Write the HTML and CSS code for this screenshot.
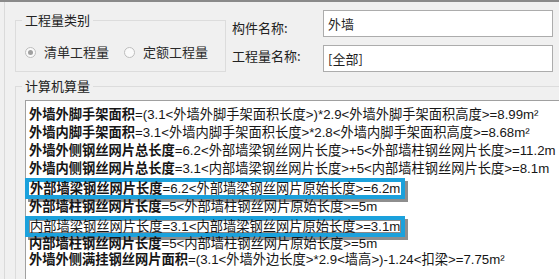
FILE: index.html
```html
<!DOCTYPE html>
<html lang="zh-CN">
<head>
<meta charset="utf-8">
<title>工程量</title>
<link rel="stylesheet" href="styles.css">
</head>
<body>
<div class="win">
  <div class="frame">
    <div class="top">
      <fieldset class="group group-type">
        <legend>工程量类别</legend>
        <div class="radios">
          <span class="radio"><span class="dot on"></span>清单工程量</span>
          <span class="radio"><span class="dot"></span>定额工程量</span>
        </div>
      </fieldset>
      <div class="form">
        <span class="lbl lbl-a">构件名称:</span>
        <span class="input">外墙</span>
        <span class="lbl lbl-b">工程量名称:</span>
        <span class="input">[全部]</span>
      </div>
    </div>
    <fieldset class="group group-calc">
      <legend>计算机算量</legend>
      <div class="list">
        <div class="row"><b>外墙外脚手架面积</b>=(3.1&lt;外墙外脚手架面积长度&gt;)*2.9&lt;外墙外脚手架面积高度&gt;=8.99m²</div>
        <div class="row"><b>外墙内脚手架面积</b>=3.1&lt;外墙内脚手架面积长度&gt;*2.8&lt;外墙内脚手架面积高度&gt;=8.68m²</div>
        <div class="row"><b>外墙外侧钢丝网片总长度</b>=6.2&lt;外部墙梁钢丝网片长度&gt;+5&lt;外部墙柱钢丝网片长度&gt;=11.2m</div>
        <div class="row"><b>外墙内侧钢丝网片总长度</b>=3.1&lt;内部墙梁钢丝网片长度&gt;+5&lt;内部墙柱钢丝网片长度&gt;=8.1m</div>
        <div class="row row-hl"><span class="hl"><b>外部墙梁钢丝网片长度</b>=6.2&lt;外部墙梁钢丝网片原始长度&gt;=6.2m</span></div>
        <div class="row"><b>外部墙柱钢丝网片长度</b>=5&lt;外部墙柱钢丝网片原始长度&gt;=5m</div>
        <div class="row row-hl"><span class="hl focus">内部墙梁钢丝网片长度=3.1&lt;内部墙梁钢丝网片原始长度&gt;=3.1m</span></div>
        <div class="row row-tight"><b>内部墙柱钢丝网片长度</b>=5&lt;内部墙柱钢丝网片原始长度&gt;=5m</div>
        <div class="row row-tight"><b>外墙外侧满挂钢丝网片面积</b>=(3.1&lt;外墙外边长度&gt;*2.9&lt;墙高&gt;)-1.24&lt;扣梁&gt;=7.75m²</div>
      </div>
    </fieldset>
  </div>
</div>
</body>
</html>
```

FILE: styles.css
```css
html, body {
  margin: 0;
  padding: 0;
}

body {
  font-family: "Noto Sans CJK SC", "Noto Sans", sans-serif;
  font-size: 13px;
  color: #1e1e1e;
  background: #f0f0f0;
}

.win {
  width: 559px;
  height: 279px;
  box-sizing: border-box;
  overflow: hidden;
  background: #f0f0f0;
  border-top: 2px solid #8a8a8a;
  padding-left: 4px;
}

.frame {
  height: 100%;
  border-left: 1px solid #dadada;
}

.top {
  display: flex;
  align-items: flex-start;
}

.group {
  margin: 0;
  border: 1px solid #dcdcdc;
  padding: 0 0 0 6px;
  box-sizing: border-box;
}

.group legend {
  padding: 0 3px;
  line-height: 16px;
  color: #222;
}

.group-type {
  margin: 10px 0 0 10px;
  width: 211px;
  height: 60px;
}

.radios {
  display: flex;
  align-items: center;
  padding-top: 16px;
  padding-left: 3px;
  line-height: 16px;
  color: #2a2a2a;
}

.radio {
  display: flex;
  align-items: center;
  gap: 8px;
  margin-right: 15px;
}

.dot {
  width: 11px;
  height: 11px;
  box-sizing: border-box;
  border: 1px solid #bdbdbd;
  border-radius: 50%;
  background: #fafafa;
  display: flex;
  align-items: center;
  justify-content: center;
}

.dot.on::after {
  content: "";
  width: 5px;
  height: 5px;
  border-radius: 50%;
  background: #a0a0a0;
}

.form {
  margin: 8px 0 0 6px;
  display: grid;
  grid-template-columns: 91px 230px;
  grid-template-rows: 27px 27px;
  row-gap: 8px;
}

.lbl {
  line-height: 16px;
  color: #222;
}

.lbl-a {
  padding-top: 10px;
}

.lbl-b {
  padding-top: 3px;
}

.input {
  box-sizing: border-box;
  border: 1px solid #acacac;
  background: #fff;
  padding: 0 4px;
  line-height: 25px;
  color: #1e1e1e;
}

.group-calc {
  margin: 6px 0 0 10px;
  width: 700px;
  height: 400px;
}

.list {
  margin: 6px 0 0 3px;
  border: 1px solid #a0a0a0;
  background: #fff;
  height: 400px;
  padding: 5px 0 0 3px;
  box-sizing: border-box;
  font-family: "Liberation Sans", "Noto Sans CJK SC", sans-serif;
  font-size: 13.25px;
}

.row {
  line-height: 18px;
  white-space: nowrap;
  color: #161616;
}

.row b {
  font-weight: 700;
}

.row-hl {
  margin: 1px 0;
}

.row-tight {
  line-height: 16px;
}

.hl {
  display: inline-block;
  line-height: 13px;
  padding: 0 1px;
  vertical-align: middle;
  background: #fff;
  box-shadow: 0 0 0 4px #1ba1dc, 3px 3px 0 4px #8e8e8e;
}

.hl.focus {
  box-shadow: inset 0 0 0 1px #8a8a8a, 0 0 0 4px #1ba1dc, 3px 3px 0 4px #8e8e8e;
}
```
